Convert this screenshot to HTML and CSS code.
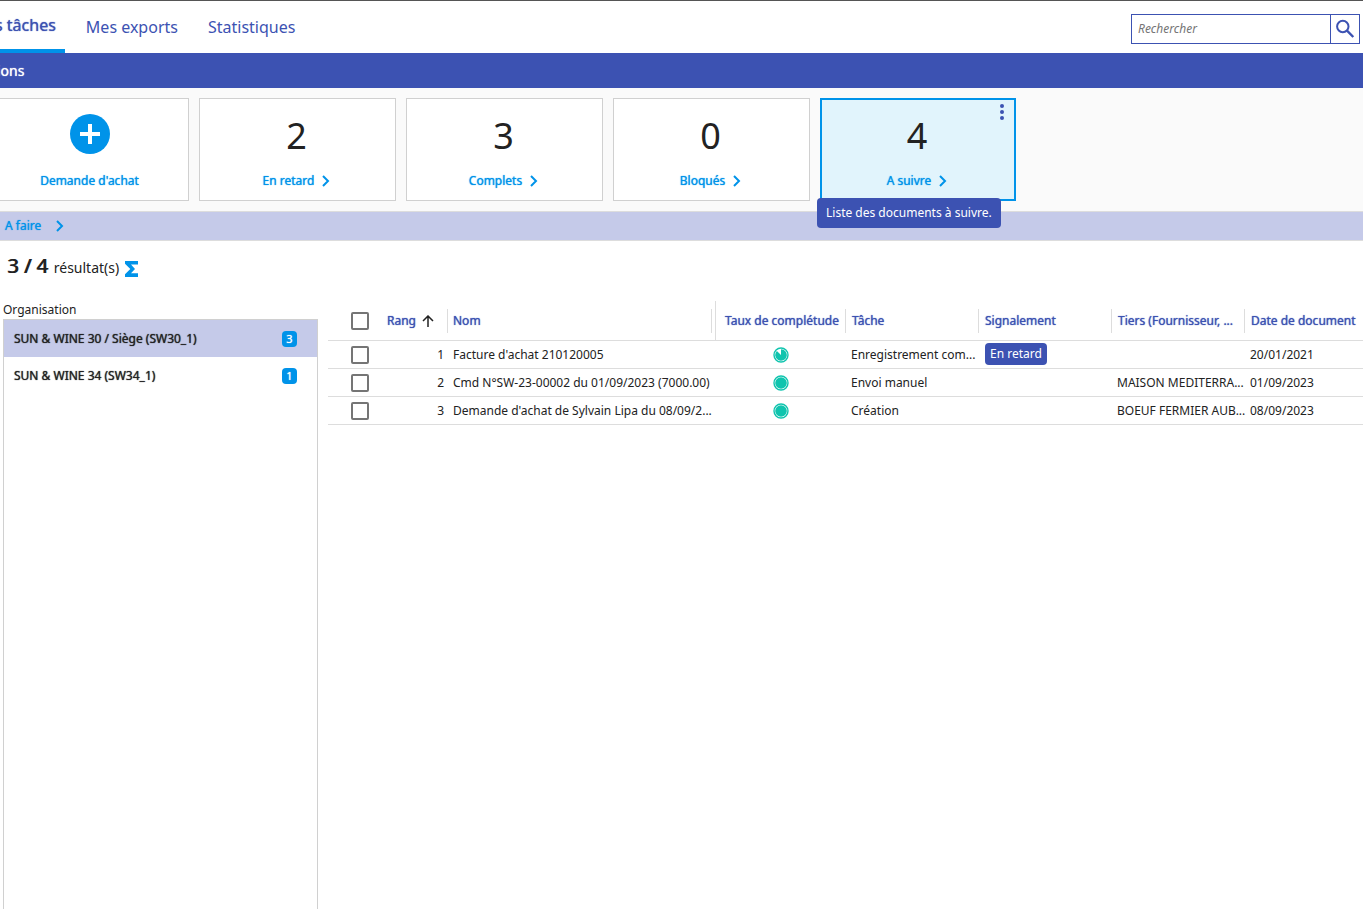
FILE: index.html
```html
<!DOCTYPE html>
<html lang="fr">
<head>
<meta charset="utf-8">
<title>Mes tâches</title>
<link rel="stylesheet" href="styles.css">
</head>
<body>
<header class="topbar">
  <nav class="tabs">
    <a class="tab tab-active strong" href="#">s tâches</a>
    <a class="tab" href="#">Mes exports</a>
    <a class="tab" href="#">Statistiques</a>
  </nav>
  <form class="search">
    <input class="search-input" type="text" placeholder="Rechercher" aria-label="Rechercher">
    <button class="search-button" type="button" aria-label="Lancer la recherche">
      <svg width="20" height="20" viewBox="0 0 20 20" fill="none" stroke="currentColor" stroke-width="2"><circle cx="7.8" cy="7.5" r="5.7"/><path d="M12 11.7 18.3 18" stroke-width="2.4"/></svg>
    </button>
  </form>
</header>
<div class="section-bar strong">ions</div>
<section class="cards">
  <a class="card" href="#">
    <svg class="plus" width="40" height="40" viewBox="0 0 40 40"><circle cx="20" cy="20" r="20" fill="#0093e9"/><path d="M20 10v20M10 20h20" stroke="#fff" stroke-width="4"/></svg>
    <span class="card-label strong">Demande d'achat</span>
  </a>
  <a class="card" href="#">
    <span class="count">2</span>
    <span class="card-label strong">En retard <svg class="chevron" width="8" height="12" viewBox="0 0 8 12"><path d="M1 1l5 5-5 5"/></svg></span>
  </a>
  <a class="card" href="#">
    <span class="count">3</span>
    <span class="card-label strong">Complets <svg class="chevron" width="8" height="12" viewBox="0 0 8 12"><path d="M1 1l5 5-5 5"/></svg></span>
  </a>
  <a class="card" href="#">
    <span class="count">0</span>
    <span class="card-label strong">Bloqués <svg class="chevron" width="8" height="12" viewBox="0 0 8 12"><path d="M1 1l5 5-5 5"/></svg></span>
  </a>
  <div class="card card-selected">
    <span class="count">4</span>
    <a class="card-label strong" href="#">A suivre <svg class="chevron" width="8" height="12" viewBox="0 0 8 12"><path d="M1 1l5 5-5 5"/></svg></a>
    <button class="more" type="button" aria-label="Options"><svg width="4" height="16" viewBox="0 0 4 16" fill="currentColor"><circle cx="2" cy="2" r="2"/><circle cx="2" cy="8" r="2"/><circle cx="2" cy="14" r="2"/></svg></button>
    <span class="tooltip" role="tooltip">Liste des documents à suivre.</span>
  </div>
</section>
<div class="subbar">
  <a class="todo strong" href="#">A faire <svg class="chevron" width="8" height="12" viewBox="0 0 8 12"><path d="M1 1l5 5-5 5"/></svg></a>
</div>
<div class="results">
  <span class="ratio">3 / 4</span>
  <span>résultat(s)</span>
  <button class="sum" type="button" aria-label="Somme"><svg width="14" height="16" viewBox="0 0 14 16"><path d="M0 0H13V3.6H6L10 8 6 12.2H13V16H0V13.2L5.3 8 0 2.8Z" fill="#0093e9"/></svg></button>
</div>
<main class="content">
  <aside class="sidebar">
    <div class="sidebar-title">Organisation</div>
    <ul class="orgs">
      <li><a class="org org-selected strong" href="#"><span>SUN &amp; WINE 30 / Siège (SW30_1)</span><span class="badge">3</span></a></li>
      <li><a class="org strong" href="#"><span>SUN &amp; WINE 34 (SW34_1)</span><span class="badge">1</span></a></li>
    </ul>
  </aside>
  <div class="grid">
    <table class="docs">
      <colgroup><col class="c-check"><col class="c-rank"><col class="c-name"><col class="c-rate"><col class="c-std"><col class="c-std"><col class="c-std"><col></colgroup>
      <thead>
        <tr>
          <th class="check"><input class="box" type="checkbox" aria-label="Tout sélectionner"></th>
          <th><div class="head strong">Rang <svg class="arrow" width="12" height="12" viewBox="0 0 12 12"><path d="M6 12V1M1 6l5-5 5 5"/></svg></div></th>
          <th class="pinned"><div class="head strong">Nom</div></th>
          <th class="rate-head"><div class="head strong">Taux de complétude</div></th>
          <th><div class="head strong">Tâche</div></th>
          <th><div class="head strong">Signalement</div></th>
          <th><div class="head strong">Tiers (Fournisseur, ...</div></th>
          <th><div class="head head-last strong">Date de document</div></th>
        </tr>
      </thead>
      <tbody>
        <tr>
          <td class="check"><input class="box" type="checkbox" aria-label="Ligne 1"></td>
          <td class="rank">1</td><td>Facture d'achat 210120005</td>
          <td class="rate"><svg width="16" height="16" viewBox="0 0 16 16"><circle cx="8" cy="8" r="7" fill="none" stroke="#0fc4ae" stroke-width="1.4"/><path d="M8 8V2.2A5.8 5.8 0 1 1 3.9 3.9Z" fill="#0fc4ae"/></svg></td>
          <td>Enregistrement com...</td><td class="tag-cell"><span class="tag">En retard</span></td><td></td><td>20/01/2021</td>
        </tr>
        <tr>
          <td class="check"><input class="box" type="checkbox" aria-label="Ligne 2"></td>
          <td class="rank">2</td><td>Cmd N°SW-23-00002 du 01/09/2023 (7000.00)</td>
          <td class="rate"><svg width="16" height="16" viewBox="0 0 16 16"><circle cx="8" cy="8" r="7" fill="none" stroke="#0fc4ae" stroke-width="1.4"/><circle cx="8" cy="8" r="5.8" fill="#0fc4ae"/></svg></td>
          <td>Envoi manuel</td><td></td><td>MAISON MEDITERRA...</td><td>01/09/2023</td>
        </tr>
        <tr>
          <td class="check"><input class="box" type="checkbox" aria-label="Ligne 3"></td>
          <td class="rank">3</td><td>Demande d'achat de Sylvain Lipa du 08/09/2...</td>
          <td class="rate"><svg width="16" height="16" viewBox="0 0 16 16"><circle cx="8" cy="8" r="7" fill="none" stroke="#0fc4ae" stroke-width="1.4"/><circle cx="8" cy="8" r="5.8" fill="#0fc4ae"/></svg></td>
          <td>Création</td><td></td><td>BOEUF FERMIER AUB...</td><td>08/09/2023</td>
        </tr>
      </tbody>
    </table>
  </div>
</main>
</body>
</html>
```

FILE: styles.css
```css
* { box-sizing: border-box; }
body {
  margin: 0;
  min-height: 100vh;
  display: flex;
  flex-direction: column;
  overflow: hidden;
  border-top: 1px solid #555;
  background: #fff;
  color: #222;
  font: 12px/16px "Noto Sans", sans-serif;
}
a { color: inherit; text-decoration: none; }
button { padding: 0; border: 0; background: none; font: inherit; cursor: pointer; }
svg { display: block; flex: none; }
.strong { font-weight: 400; text-shadow: 0 0 1px currentColor; }

.topbar { display: flex; justify-content: space-between; align-items: center; height: 52px; padding-right: 3px; color: #3c52b2; }
.tabs { display: flex; align-self: stretch; gap: 21px; font-size: 16px; line-height: 24px; }
.tab { padding: 14px 9px 0 0; }
.tab-active { margin-left: -5px; padding-top: 12px; border-bottom: 4px solid #0093e9; }
.search { display: flex; height: 30px; margin-top: 4px; border: 1px solid #3c52b2; }
.search-input { width: 198px; padding: 0 6px; border: 0; outline: 0; background: none; font: italic 12px/16px "Noto Sans", sans-serif; }
.search-input::placeholder { color: #757575; opacity: 1; }
.search-button { display: grid; place-items: center; width: 29px; border-left: 1px solid #3c52b2; color: #3c52b2; }

.section-bar { height: 35px; padding: 8px 0; margin-left: -3px; background: #3c52b2; color: #fff; font-size: 14px; line-height: 20px; }

.cards { display: flex; gap: 10px; padding: 10px 0; margin-left: -8px; background: #fafafa; }
.card { position: relative; display: flex; flex-direction: column; align-items: center; width: 197px; height: 103px; padding: 15px 2px 0 0; border: 1px solid #d0d0d0; background: #fff; }
.plus { margin-bottom: 19px; }
.count { margin-bottom: 15px; font-size: 36px; line-height: 44px; }
.card-label { display: flex; align-items: center; gap: 8px; color: #0093e9; }
.chevron { fill: none; stroke: #0093e9; stroke-width: 2; }
.card-selected { width: 196px; padding-top: 14px; border: 2px solid #0093e9; background: #e1f4fc; }
.more { position: absolute; top: 4px; right: 10px; color: #3c52b2; }
.tooltip { position: absolute; top: 98px; left: -5px; padding: 7px 9px; border-radius: 4px; background: #3c52b2; color: #fff; white-space: nowrap; }

.subbar { height: 30px; padding: 6px 5px; border: solid #ddd; border-width: 1px 0; background: #c5cae9; }
.todo { display: inline-flex; align-items: center; gap: 15px; color: #0093e9; }

.results { display: flex; align-items: baseline; gap: 6px; padding: 11px 7px 0; font-size: 14px; line-height: 28px; }
.ratio { font-size: 20px; text-shadow: 1px 0 0 currentColor; }
.sum { align-self: center; margin-top: 4px; }

.content { display: flex; flex: 1; gap: 10px; padding: 19px 0 0 3px; }
.sidebar { display: flex; flex-direction: column; width: 315px; }
.sidebar-title { line-height: 18px; }
.orgs { flex: 1; margin: 0; padding: 0; border: solid #d0d0d0; border-width: 1px 1px 0; list-style: none; }
.org { display: flex; justify-content: space-between; align-items: center; height: 37px; padding: 0 20px 0 10px; }
.org-selected { background: #c5cae9; }
.badge { width: 15px; border-radius: 4px; background: #0093e9; color: #fff; font-size: 11px; text-align: center; }

.grid { flex: 1; min-width: 0; }
.docs { width: 100%; border-collapse: separate; border-spacing: 0; table-layout: fixed; }
.c-check { width: 53px; }
.c-rank { width: 67px; }
.c-name { width: 268px; }
.c-rate { width: 130px; }
.c-std { width: 133px; }
.docs th { height: 40px; padding: 0; border-bottom: 1px solid #ddd; color: #3c52b2; text-align: left; }
.docs td { height: 28px; padding: 0 0 0 5px; border-bottom: 1px solid #ddd; white-space: nowrap; }
.head { display: flex; align-items: center; gap: 6px; height: 24px; padding-left: 6px; border-right: 1px solid #ddd; white-space: nowrap; }
.head-last { border-right: 0; }
.docs .pinned { padding-right: 3px; border-right: 1px solid #ddd; }
.pinned .head { padding-left: 5px; }
.rate-head .head { padding-left: 9px; }
.arrow { fill: none; stroke: #222; stroke-width: 1.5; }
.docs .check { padding-left: 23px; }
.box { display: block; appearance: none; width: 18px; height: 18px; margin: 0; border: 2px solid #757575; border-radius: 2px; background: #fff; }
.docs .rank { padding: 0 4px 0 0; text-align: right; }
.docs .rate { padding: 0; }
.rate svg { margin: 0 auto; }
.tag { display: inline-block; padding: 3px 5px; border-radius: 4px; background: #3c52b2; color: #fff; }
.docs .tag-cell { vertical-align: top; padding: 2px 0 0 6px; }
```
